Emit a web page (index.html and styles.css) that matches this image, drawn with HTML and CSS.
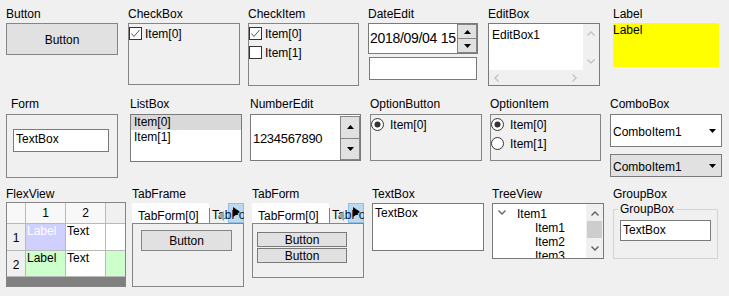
FILE: index.html
```html
<!DOCTYPE html>
<html lang="en">

<head>
    <meta charset="UTF-8">
    <title>Controls</title>
    <link rel="stylesheet" href="styles.css">
</head>

<body>
    <div class="board">
        <!-- row 1 -->
        <div class="cell">
            <div class="cap">Button</div>
            <div class="btn btn-main">Button</div>
        </div>
        <div class="cell shift2">
            <div class="cap">CheckBox</div>
            <div class="panel box-check">
                <div class="opt"><svg class="mark" viewBox="0 0 13 13"><rect x="0.5" y="0.5" width="12" height="12" fill="#fff" stroke="#333"/><polyline points="2.5,6.5 5,9.5 10.5,3" fill="none" stroke="#555"/></svg><span>Item[0]</span></div>
            </div>
        </div>
        <div class="cell shift2">
            <div class="cap">CheckItem</div>
            <div class="panel box-checkitem">
                <div class="opt"><svg class="mark" viewBox="0 0 13 13"><rect x="0.5" y="0.5" width="12" height="12" fill="#fff" stroke="#333"/><polyline points="2.5,6.5 5,9.5 10.5,3" fill="none" stroke="#555"/></svg><span>Item[0]</span></div>
                <div class="opt"><svg class="mark" viewBox="0 0 13 13"><rect x="0.5" y="0.5" width="12" height="12" fill="#fff" stroke="#333"/></svg><span>Item[1]</span></div>
            </div>
        </div>
        <div class="cell shift2">
            <div class="cap">DateEdit</div>
            <div class="field date">
                <div class="date-text">2018/09/04 15:30</div>
                <div class="spin">
                    <div class="spin-btn"><svg width="7" height="4" viewBox="0 0 7 4"><polygon points="3.5,0 7,4 0,4" fill="#000"/></svg></div>
                    <div class="spin-btn"><svg width="7" height="4" viewBox="0 0 7 4"><polygon points="0,0 7,0 3.5,4" fill="#000"/></svg></div>
                </div>
            </div>
            <div class="field date-extra"></div>
        </div>
        <div class="cell shift2">
            <div class="cap">EditBox</div>
            <div class="editbox">
                <div class="edit-text">EditBox1</div>
                <div class="vbar">
                    <svg width="8" height="5" viewBox="0 0 8 5"><polyline points="0.5,4.5 4,1 7.5,4.5" fill="none" stroke="#c3c3c3" stroke-width="1.4"/></svg>
                    <svg width="8" height="5" viewBox="0 0 8 5"><polyline points="0.5,0.5 4,4 7.5,0.5" fill="none" stroke="#c3c3c3" stroke-width="1.4"/></svg>
                </div>
                <div class="hbar">
                    <svg width="5" height="8" viewBox="0 0 5 8"><polyline points="4.5,0.5 1,4 4.5,7.5" fill="none" stroke="#c3c3c3" stroke-width="1.4"/></svg>
                    <svg width="5" height="8" viewBox="0 0 5 8"><polyline points="0.5,0.5 4,4 0.5,7.5" fill="none" stroke="#c3c3c3" stroke-width="1.4"/></svg>
                </div>
                <div class="corner"></div>
            </div>
        </div>
        <div class="cell shift7">
            <div class="cap">Label</div>
            <div class="yellow">Label</div>
        </div>

        <!-- row 2 -->
        <div class="cell low">
            <div class="cap indent">Form</div>
            <div class="panel form">
                <div class="field textbox form-text">TextBox</div>
            </div>
        </div>
        <div class="cell low shift4">
            <div class="cap">ListBox</div>
            <div class="field listbox">
                <div class="list-item selected">Item[0]</div>
                <div class="list-item">Item[1]</div>
            </div>
        </div>
        <div class="cell low shift4">
            <div class="cap">NumberEdit</div>
            <div class="field number">
                <div class="number-text">1234567890</div>
                <div class="spin">
                    <div class="spin-btn"><svg width="7" height="4" viewBox="0 0 7 4"><polygon points="3.5,0 7,4 0,4" fill="#000"/></svg></div>
                    <div class="spin-btn"><svg width="7" height="4" viewBox="0 0 7 4"><polygon points="0,0 7,0 3.5,4" fill="#000"/></svg></div>
                </div>
            </div>
        </div>
        <div class="cell low shift4">
            <div class="cap">OptionButton</div>
            <div class="panel box-option">
                <div class="opt radio"><svg class="mark" viewBox="0 0 13 13"><circle cx="6.5" cy="6.5" r="6" fill="#fff" stroke="#333"/><circle cx="6.5" cy="6.5" r="3" fill="#333"/></svg><span>Item[0]</span></div>
            </div>
        </div>
        <div class="cell low shift4">
            <div class="cap">OptionItem</div>
            <div class="panel box-optionitem">
                <div class="opt radio"><svg class="mark" viewBox="0 0 13 13"><circle cx="6.5" cy="6.5" r="6" fill="#fff" stroke="#333"/><circle cx="6.5" cy="6.5" r="3" fill="#333"/></svg><span>Item[0]</span></div>
                <div class="opt radio"><svg class="mark" viewBox="0 0 13 13"><circle cx="6.5" cy="6.5" r="6" fill="#fff" stroke="#333"/></svg><span>Item[1]</span></div>
            </div>
        </div>
        <div class="cell low shift4">
            <div class="cap">ComboBox</div>
            <div class="field combo">
                <span class="combo-text">ComboItem1</span>
                <svg class="drop" width="7" height="4" viewBox="0 0 7 4"><polygon points="0,0 7,0 3.5,4" fill="#000"/></svg>
            </div>
            <div class="field combo combo-flat">
                <span class="combo-text">ComboItem1</span>
                <svg class="drop" width="7" height="4" viewBox="0 0 7 4"><polygon points="0,0 7,0 3.5,4" fill="#000"/></svg>
            </div>
        </div>

        <!-- row 3 -->
        <div class="cell">
            <div class="cap">FlexView</div>
            <div class="flexview">
                <div class="fgrid">
                    <div class="fc fh top"></div>
                    <div class="fc fh top">1</div>
                    <div class="fc fh top">2</div>
                    <div class="fc fh"></div>
                    <div class="fc fh side">1</div>
                    <div class="fc lavender">Label</div>
                    <div class="fc">Text</div>
                    <div class="fc"></div>
                    <div class="fc fh side">2</div>
                    <div class="fc mint">Label</div>
                    <div class="fc">Text</div>
                    <div class="fc mint"></div>
                </div>
            </div>
        </div>
        <div class="cell shift6">
            <div class="cap">TabFrame</div>
            <div class="tabctl">
                <div class="strip">
                    <div class="tab on">TabForm[0]</div>
                    <div class="tab">TabForm[1]</div>
                    <div class="tab-scroll">
                        <svg class="arr-left" width="6" height="10" viewBox="0 0 6 10"><polygon points="6,0 6,10 0,5" fill="#a0a0a0"/></svg>
                        <div class="arr-box"><svg width="7" height="10" viewBox="0 0 7 10"><polygon points="0,0 7,5 0,10" fill="#000"/></svg></div>
                    </div>
                </div>
                <div class="page page-frame">
                    <div class="btn btn-tab">Button</div>
                </div>
            </div>
        </div>
        <div class="cell shift6">
            <div class="cap">TabForm</div>
            <div class="tabctl">
                <div class="strip">
                    <div class="tab on">TabForm[0]</div>
                    <div class="tab">TabForm[1]</div>
                    <div class="tab-scroll">
                        <svg class="arr-left" width="6" height="10" viewBox="0 0 6 10"><polygon points="6,0 6,10 0,5" fill="#a0a0a0"/></svg>
                        <div class="arr-box"><svg width="7" height="10" viewBox="0 0 7 10"><polygon points="0,0 7,5 0,10" fill="#000"/></svg></div>
                    </div>
                </div>
                <div class="page page-form">
                    <div class="btn btn-small">Button</div>
                    <div class="btn btn-small">Button</div>
                </div>
            </div>
        </div>
        <div class="cell shift6">
            <div class="cap">TextBox</div>
            <div class="field textbox big-text">TextBox</div>
        </div>
        <div class="cell shift6">
            <div class="cap">TreeView</div>
            <div class="field tree">
                <div class="tree-body">
                    <div class="node root"><svg class="toggle" width="8" height="5" viewBox="0 0 8 5"><polyline points="0.5,0.5 4,4 7.5,0.5" fill="none" stroke="#666" stroke-width="1.4"/></svg>Item1</div>
                    <div class="node child">Item1</div>
                    <div class="node child">Item2</div>
                    <div class="node child">Item3</div>
                </div>
                <div class="tree-bar">
                    <svg width="8" height="5" viewBox="0 0 8 5"><polyline points="0.5,4.5 4,1 7.5,4.5" fill="none" stroke="#606060" stroke-width="1.4"/></svg>
                    <div class="thumb"></div>
                    <svg width="8" height="5" viewBox="0 0 8 5"><polyline points="0.5,0.5 4,4 7.5,0.5" fill="none" stroke="#606060" stroke-width="1.4"/></svg>
                </div>
            </div>
        </div>
        <div class="cell shift7">
            <div class="cap">GroupBox</div>
            <fieldset class="group">
                <legend>GroupBox</legend>
                <div class="field textbox group-text">TextBox</div>
            </fieldset>
        </div>
    </div>
</body>

</html>
```

FILE: styles.css
```css
* {
    box-sizing: border-box;
}

body {
    margin: 0;
    background-color: #f0f0f0;
    font-family: "Liberation Sans", Arial, sans-serif;
    font-size: 12px;
    color: #000;
}

.board {
    display: grid;
    grid-template-columns: repeat(6, 120px);
    grid-template-rows: 90px 90px 100px;
    padding: 7px 0 0 6px;
}

.cell {
    display: flex;
    flex-direction: column;
    align-items: flex-start;
}

.shift2 { padding-left: 2px; }
.shift4 { padding-left: 4px; }
.shift6 { padding-left: 6px; }
.shift7 { padding-left: 7px; }

.cap {
    height: 16px;
    line-height: 14px;
    white-space: nowrap;
}

.low .cap {
    height: 17px;
}

.cap.indent {
    padding-left: 5px;
}

/* common boxes */

.panel {
    border: 1px solid #858585;
}

.field {
    background-color: #fff;
    border: 1px solid #7a7a7a;
}

.btn {
    display: flex;
    align-items: center;
    justify-content: center;
    background-color: #e1e1e1;
    border: 1px solid #858585;
    line-height: 14px;
}

.btn-main {
    width: 112px;
    height: 32px;
    padding-top: 1px;
}

/* check / radio */

.box-check {
    width: 112px;
    height: 62px;
    padding-top: 3px;
}

.box-checkitem {
    width: 111px;
    height: 63px;
    padding-top: 3px;
}

.box-option {
    width: 112px;
    height: 47px;
    padding-top: 3px;
}

.box-optionitem {
    width: 111px;
    height: 47px;
    padding-top: 3px;
}

.opt {
    display: flex;
    align-items: center;
    gap: 3px;
    height: 13px;
    margin-bottom: 6px;
    line-height: 13px;
    white-space: nowrap;
}

.opt span {
    padding-top: 2px;
}

.opt.radio {
    gap: 6px;
}

.mark {
    width: 13px;
    height: 13px;
    flex-shrink: 0;
}

/* spin editors */

.date {
    display: flex;
    width: 110px;
    height: 31px;
}

.date-text {
    flex: 1;
    overflow: hidden;
    white-space: nowrap;
    padding-left: 1px;
    font-size: 14px;
    letter-spacing: -0.3px;
    line-height: 29px;
}

.date-extra {
    width: 108px;
    height: 23px;
    margin: 3px 0 0 1px;
}

.spin {
    display: flex;
    flex-direction: column;
    width: 20px;
    flex-shrink: 0;
}

.spin-btn {
    flex: 1;
    display: flex;
    align-items: center;
    justify-content: center;
    background-color: #e1e1e1;
    border: 1px solid #858585;
}

.spin-btn + .spin-btn {
    border-top: none;
}

.number {
    display: flex;
    width: 111px;
    height: 47px;
}

.number-text {
    flex: 1;
    padding: 2px 0 0 2px;
    font-size: 13px;
    letter-spacing: -0.3px;
    line-height: 43px;
}

.number .spin {
    margin: 1px 0 0;
}

/* edit box */

.editbox {
    display: grid;
    grid-template-columns: 94px 16px;
    grid-template-rows: 46px 15px;
    width: 112px;
    height: 63px;
    border: 1px solid #7a7a7a;
    background-color: #f0f0f0;
}

.edit-text {
    background-color: #fff;
    padding: 4px 0 0 3px;
    line-height: 14px;
}

.vbar {
    display: flex;
    flex-direction: column;
    align-items: center;
    justify-content: space-between;
    padding: 7px 0 6px;
}

.vbar svg,
.hbar svg {
    display: block;
}

.hbar {
    display: flex;
    align-items: center;
    justify-content: space-between;
    padding: 0 6px 0 5px;
}

.yellow {
    width: 106px;
    height: 44px;
    background-color: #ff0;
    line-height: 14px;
}

/* row 2 */

.form {
    width: 112px;
    height: 64px;
    padding: 14px 0 0 6px;
}

.textbox {
    padding: 2px 0 0 2px;
    line-height: 14px;
    white-space: nowrap;
}

.form-text {
    width: 96px;
    height: 23px;
}

.listbox {
    width: 112px;
    height: 48px;
}

.list-item {
    height: 15px;
    line-height: 15px;
    padding-left: 3px;
}

.list-item.selected {
    background-color: #d9d9d9;
}

.combo {
    display: flex;
    align-items: center;
    width: 112px;
    height: 33px;
    padding: 0 5px 0 2px;
}

.combo-text {
    flex: 1;
    padding-top: 3px;
    line-height: 14px;
}

.combo-flat {
    height: 23px;
    margin-top: 7px;
    background-color: #e1e1e1;
}

.combo-flat .combo-text {
    padding-top: 2px;
}

.drop {
    flex-shrink: 0;
}

/* row 3 */

.flexview {
    width: 120px;
    height: 88px;
    border: 1px solid #858585;
    background-color: #808080;
}

.fgrid {
    display: grid;
    grid-template-columns: 18px 39px 39px 1fr;
    grid-template-rows: 20px 26px 25px;
    gap: 1px;
    background-color: #b9b9b9;
    border-bottom: 1px solid #b9b9b9;
}

.fc {
    background-color: #fff;
    padding-left: 1px;
    line-height: 14px;
    white-space: nowrap;
    overflow: hidden;
}

.fh {
    display: flex;
    align-items: center;
    justify-content: center;
    background-color: #f0f0f0;
    padding-left: 0;
}

.fh.top {
    background-color: #f8f8f8;
}

.fh.side {
    padding-top: 2px;
}

.lavender {
    background-color: #d0d0ff;
    color: #fff;
}

.mint {
    background-color: #ccffcc;
}

.tabctl {
    width: 112px;
}

.strip {
    display: flex;
    align-items: flex-end;
    height: 20px;
    position: relative;
    overflow: hidden;
}

.tab {
    flex-shrink: 0;
    height: 15px;
    padding-left: 2px;
    border-left: 1px solid #808080;
    line-height: 14px;
    white-space: nowrap;
}

.tab.on {
    width: 77px;
    height: 20px;
    padding: 6px 0 0 6px;
    border-left: none;
    background-color: #fff;
    border-top-right-radius: 3px;
}

.tab-scroll {
    position: absolute;
    top: 0;
    left: 86px;
    display: flex;
    align-items: center;
    height: 20px;
}

.arr-left {
    display: block;
    margin-top: 6px;
}

.arr-box {
    display: flex;
    align-items: center;
    justify-content: center;
    width: 16px;
    height: 20px;
    margin-left: 4px;
    padding-bottom: 2px;
    background-color: rgba(0, 120, 215, 0.2);
    border: 1px solid rgba(0, 120, 215, 0.25);
}

.page {
    border: 1px solid #858585;
}

.page-frame {
    height: 64px;
    padding: 6px 0 0 8px;
}

.btn-tab {
    width: 91px;
    height: 21px;
    padding-top: 1px;
}

.page-form {
    height: 55px;
    padding: 8px 0 0 4px;
}

.btn-small {
    width: 90px;
    height: 15px;
    margin-bottom: 1px;
    border-color: #7a7a7a;
}

.big-text {
    width: 112px;
    height: 48px;
}

.tree {
    display: flex;
    width: 112px;
    height: 56px;
    overflow: hidden;
}

.tree-body {
    flex: 1;
    padding-top: 3px;
}

.node {
    height: 14px;
    line-height: 14px;
    white-space: nowrap;
}

.root {
    display: flex;
    align-items: center;
    padding-left: 5px;
}

.toggle {
    margin: 0 11px 3px 0;
}

.child {
    padding-left: 42px;
}

.tree-bar {
    display: flex;
    flex-direction: column;
    align-items: center;
    width: 17px;
    background-color: #f0f0f0;
    padding-top: 7px;
}

.tree-bar svg {
    display: block;
}

.thumb {
    width: 15px;
    height: 17px;
    margin: 5px 0 8px;
    background-color: #cdcdcd;
}

.group {
    width: 105px;
    height: 56px;
    margin: 0;
    padding: 0 6px;
    border: 1px solid #d3d3d3;
}

.group legend {
    padding: 0 2px;
    margin-left: -2px;
    line-height: 12px;
}

.group-text {
    width: 91px;
    height: 21px;
    margin-top: 5px;
}
```
